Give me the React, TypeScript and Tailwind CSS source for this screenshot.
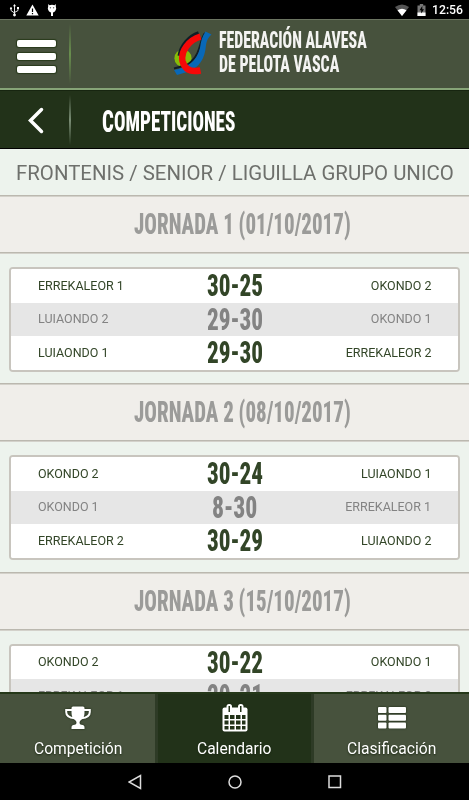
import { useLayoutEffect, useRef, useState } from "react";

type FitProps = { text: string; width: number; className: string };

/* Condensed display lettering: squeezes a line of text to a given width. */
function Fit({ text, width, className }: FitProps) {
  const ref = useRef<HTMLSpanElement>(null);
  const [scale, setScale] = useState(1);
  useLayoutEffect(() => {
    if (ref.current) setScale(width / ref.current.offsetWidth);
  }, [text, width]);
  return (
    <span className="block" style={{ width }}>
      <span
        ref={ref}
        className={"inline-block origin-left whitespace-nowrap align-top " + className}
        style={{ transform: `scaleX(${scale})` }}
      >
        {text}
      </span>
    </span>
  );
}

type Match = [string, string, string];

const rounds: { title: string; matches: Match[] }[] = [
  {
    title: "JORNADA 1 (01/10/2017)",
    matches: [
      ["ERREKALEOR 1", "30-25", "OKONDO 2"],
      ["LUIAONDO 2", "29-30", "OKONDO 1"],
      ["LUIAONDO 1", "29-30", "ERREKALEOR 2"],
    ],
  },
  {
    title: "JORNADA 2 (08/10/2017)",
    matches: [
      ["OKONDO 2", "30-24", "LUIAONDO 1"],
      ["OKONDO 1", "8-30", "ERREKALEOR 1"],
      ["ERREKALEOR 2", "30-29", "LUIAONDO 2"],
    ],
  },
  {
    title: "JORNADA 3 (15/10/2017)",
    matches: [
      ["OKONDO 2", "30-22", "OKONDO 1"],
      ["ERREKALEOR 1", "20-21", "ERREKALEOR 2"],
    ],
  },
];

function StatusBar() {
  return (
    <div className="flex h-[19px] shrink-0 items-center bg-black pr-[6px] pl-[9px] text-white">
      <svg width="12" height="14" viewBox="0 0 12 14" fill="none" stroke="#e8e8e8" strokeWidth="1">
        <path d="M5.5 2v10M2 5.5v2l3.500 2.500M9 5v2.500L5.500 9.500" />
        <path d="M5.500 1l1.500 2.200H4z" fill="#fff" stroke="none" />
        <circle cx="5.500" cy="12" r="1.400" fill="#fff" stroke="none" />
        <circle cx="2" cy="5.300" r="1.100" fill="#fff" stroke="none" />
        <path d="M8 4h2v2H8z" fill="#fff" stroke="none" />
      </svg>
      <svg className="ml-[5px]" width="13" height="12" viewBox="0 0 13 12">
        <path d="M6.500 0.500L12.700 11.500H.3z" fill="#fff" />
        <path d="M5.900 4.500h1.200v3.500H5.900zM5.900 9h1.200v1.200H5.900z" fill="#000" />
      </svg>
      <svg className="ml-[8px]" width="10" height="14" viewBox="0 0 10 14">
        <path d="M1.200 1l1.300 1.300Q5 1 7.500 2.300L8.800 1v2.500l.4 2Q8.500 9 6 9.500V13H4V9.500Q1.500 9 .8 5.500l.4-2z" fill="#fff" />
        <circle cx="3.400" cy="4.800" r=".7" fill="#666" />
        <circle cx="6.600" cy="4.800" r=".7" fill="#666" />
      </svg>
      <svg className="ml-auto" width="14" height="12" viewBox="0 0 14 12">
        <path d="M0 3Q7-2 14 3L7 12z" fill="#555" />
        <path d="M2.500 6.300Q7 3.300 11.500 6.300L7 12z" fill="#fff" />
      </svg>
      <svg className="ml-[8px]" width="9" height="12" viewBox="0 0 9 12">
        <path d="M.5 1.500h2.300V0h3.400v1.500h2.300V12h-8z" fill="#777" />
        <path d="M.5 8.500h8V12h-8z" fill="#fff" />
        <path d="M5.300 2L2.500 6.300h1.700V9.500l2.800-4.200H5.300z" fill="#000" />
      </svg>
      <span className="ml-[6px] text-[13px] leading-[19px] font-medium">
        <Fit text="12:56" width={31} className="" />
      </span>
    </div>
  );
}

function Logo() {
  return (
    <svg width="40" height="47" viewBox="0 0 40 47" fill="none">
      <circle cx="11" cy="29.200" r="8.600" fill="#86bc08" />
      <path d="M33 4C30 8 29 14 27 20C25 27 21 32 15 36L2 39.500" stroke="#111d25" strokeWidth="2" />
      <path d="M33.500 2.500L39.500 5.500Q35 9 34 16C33 30 27 39 15 43L5 46L2 41C15 39 25 32 28 19Q29 9 33.500 2.500Z" fill="#0868b8" />
      <path d="M27 5C18 8 10 17 8.500 27" stroke="#111d25" strokeWidth="6" />
      <path d="M28.500 7.500C17 11 8.500 22 10.500 32C12.500 40 18.500 43.500 28.500 41.500" stroke="#f60808" strokeWidth="6.400" />
    </svg>
  );
}

function Header() {
  return (
    <header className="flex h-[71px] shrink-0 items-center border-t border-b-2 border-t-[#6b7461] border-b-[#86a477] bg-[#47523d] pl-[17px]">
      <div className="mt-[4px] flex w-[39px] flex-col gap-[6px]">
        <i className="h-[7px] rounded-[2px] bg-white shadow-[0_0_1px_1px_#283a1b]" />
        <i className="h-[7px] rounded-[2px] bg-white shadow-[0_0_1px_1px_#283a1b]" />
        <i className="h-[7px] rounded-[2px] bg-white shadow-[0_0_1px_1px_#283a1b]" />
      </div>
      <div className="ml-[13px] h-[60px] w-[2px] bg-linear-to-b from-transparent via-[#698f4e] to-transparent" />
      <div className="-mt-[4px] ml-[101px]">
        <Logo />
      </div>
      <div className="-mt-px ml-[7px] font-extrabold text-[#f4f4f2] [font-stretch:75%]">
        <Fit text="FEDERACIÓN ALAVESA" width={148} className="text-[23px] leading-[22px]" />
        <Fit text="DE PELOTA VASCA" width={120} className="text-[23px] leading-[22px]" />
      </div>
    </header>
  );
}

function Score({ value }: { value: string }) {
  return (
    <Fit
      text={value}
      width={value.length === 4 ? 45 : 56}
      className="text-[31px] leading-[33.5px] font-extrabold [font-stretch:75%]"
    />
  );
}

function TabIcon({ kind }: { kind: string }) {
  if (kind === "trophy")
    return (
      <svg width="26" height="24" viewBox="0 0 26 24" fill="#fff">
        <path d="M7.500 4H1.200v2q0 5.500 8.300 6.300M18.500 4h6.300v2q0 5.500-8.300 6.300" fill="none" stroke="#fff" strokeWidth="2" />
        <path d="M8 0.500h10q1.500 0 1.500 1.500v5q0 5-3.500 7-1.500 1-1.500 2.800 0 1.800 2 1.900 3 .3 3 2.500V23H6.500v-1.800q0-2.200 3-2.500 2-.1 2-1.900 0-1.800-1.500-2.800-3.500-2-3.500-7V2Q6.500.5 8 .5z" />
      </svg>
    );
  if (kind === "calendar")
    return (
      <svg width="26" height="28" viewBox="0 0 26 28" fill="#fff">
        <rect x="0.500" y="3.500" width="25" height="24" rx="2" />
        <rect x="4.500" y="0" width="5.500" height="9" rx="2.500" />
        <rect x="16" y="0" width="5.500" height="9" rx="2.500" />
        <path d="M6.500 2h1.500v6H6.500zM18 2h1.500v6H18zM2.500 11h4v4h-4zM8 11h4.500v4H8zM14 11h4.500v4H14zM20 11h3.500v4H20zM2.500 16.500h4v4h-4zM8 16.500h4.500v4H8zM14 16.500h4.500v4H14zM20 16.500h3.500v4H20zM2.500 22h4v3.500h-4zM8 22h4.500v3.500H8zM14 22h4.500v3.500H14zM20 22h3.500v3.500H20z" fill="#223219" />
      </svg>
    );
  return (
    <svg width="28" height="22" viewBox="0 0 28 22" fill="#fff">
      {[0, 7.8, 15.6].map((y) => (
        <g key={y}>
          <rect x="0" y={y} width="8.500" height="6" rx="1" />
          <rect x="10.500" y={y} width="17.500" height="6" rx="1" />
        </g>
      ))}
    </svg>
  );
}

function Tab({ kind, label, active, width }: { kind: string; label: string; active?: boolean; width: number }) {
  return (
    <div
      className={
        "flex h-full flex-col items-center text-white [text-shadow:0_1px_2px_#1a2812] " +
        (active
          ? "w-[159px] border-r-[3px] border-l-[3px] border-[#2e3b26] bg-[#223219]"
          : "flex-1 bg-[#47523d]")
      }
    >
      <div className="mt-[8px] flex h-[32px] items-center drop-shadow-[0_0_1px_#1a2812]">
        <TabIcon kind={kind} />
      </div>
      <div className="mt-[4px] text-[16px] leading-[22px]">
        <Fit text={label} width={width} className="" />
      </div>
    </div>
  );
}

export default function App() {
  return (
    <div className="flex h-[800px] w-[469px] flex-col overflow-hidden bg-[#edf3ed] font-[Roboto,sans-serif]">
      <StatusBar />
      <Header />
      <div className="flex h-[59px] shrink-0 items-center border-t border-b border-t-[#172510] border-b-black bg-[#223219] text-white">
        <svg className="ml-[27px]" width="18" height="28" viewBox="0 0 18 28" fill="none" stroke="#fff" strokeWidth="3.500" strokeLinecap="round">
          <path d="M14.500 3.500L3.500 14.500L14.500 25.500" />
        </svg>
        <div className="ml-[24px] h-[50px] w-[2px] bg-linear-to-b from-transparent via-[#7a8d75] to-transparent" />
        <div className="mt-[4px] ml-[31px] flex items-baseline font-extrabold [font-stretch:75%]">
          <Fit text="C" width={12} className="text-[31px] leading-[34px]" />
          <Fit text="OMPETICIONES" width={121} className="text-[27px] leading-[34px]" />
        </div>
      </div>
      <div className="flex h-[46px] shrink-0 items-center justify-center pt-[2px] text-[#6e706c]">
        <Fit text="FRONTENIS / SENIOR / LIGUILLA GRUPO UNICO" width={438} className="text-[20.5px] leading-[30px]" />
      </div>
      <main className="min-h-0 flex-1 overflow-hidden">
        {rounds.map((round) => (
          <section key={round.title} className="h-[188.3px]">
            <h2 className="flex h-[58px] items-center justify-center border-y border-[#bbb8af] bg-[#f0eeea] pl-[16px] text-[#9b9b99] shadow-[inset_0_1px_0_#d3d1ca,0_1px_0_#d3d1ca]">
              <Fit
                text={round.title}
                width={217}
                className="text-[29.5px] leading-[38px] font-extrabold [font-stretch:75%]"
              />
            </h2>
            <div className="mx-[9px] mt-[14px] overflow-hidden rounded-[4px] border-2 border-[#c8c5be] bg-white">
              {round.matches.map(([home, score, away], i) => (
                <div
                  key={home}
                  className={
                    "flex h-[33.5px] items-center justify-between pr-[27px] pl-[27px] text-[13.5px] " +
                    (i % 2 ? "bg-[#e6e6e6] text-[#838383]" : "bg-white text-[#324527]")
                  }
                >
                  <span className="-mt-[2px] flex-1 origin-left scale-x-[0.925]">{home}</span>
                  <Score value={score} />
                  <span className="-mt-[2px] flex-1 origin-right scale-x-[0.925] text-right">{away}</span>
                </div>
              ))}
            </div>
          </section>
        ))}
      </main>
      <nav className="flex h-[71px] shrink-0 border-t-2 border-[#253819]">
        <Tab kind="trophy" label="Competición" width={88} />
        <Tab kind="calendar" label="Calendario" width={75} active />
        <Tab kind="list" label="Clasificación" width={89} />
      </nav>
      <div className="flex h-[37px] shrink-0 items-center justify-center gap-[86px] bg-black">
        <svg width="14" height="16" viewBox="0 0 14 16" fill="none" stroke="#ddd" strokeWidth="1.500">
          <path d="M12.500 1.500v13L1 8z" />
        </svg>
        <svg width="14" height="14" viewBox="0 0 14 14" fill="none" stroke="#ddd" strokeWidth="1.500">
          <circle cx="7" cy="7" r="6" />
        </svg>
        <svg width="14" height="14" viewBox="0 0 14 14" fill="none" stroke="#ddd" strokeWidth="1.500">
          <rect x="1" y="1" width="11.500" height="11.500" />
        </svg>
      </div>
    </div>
  );
}
